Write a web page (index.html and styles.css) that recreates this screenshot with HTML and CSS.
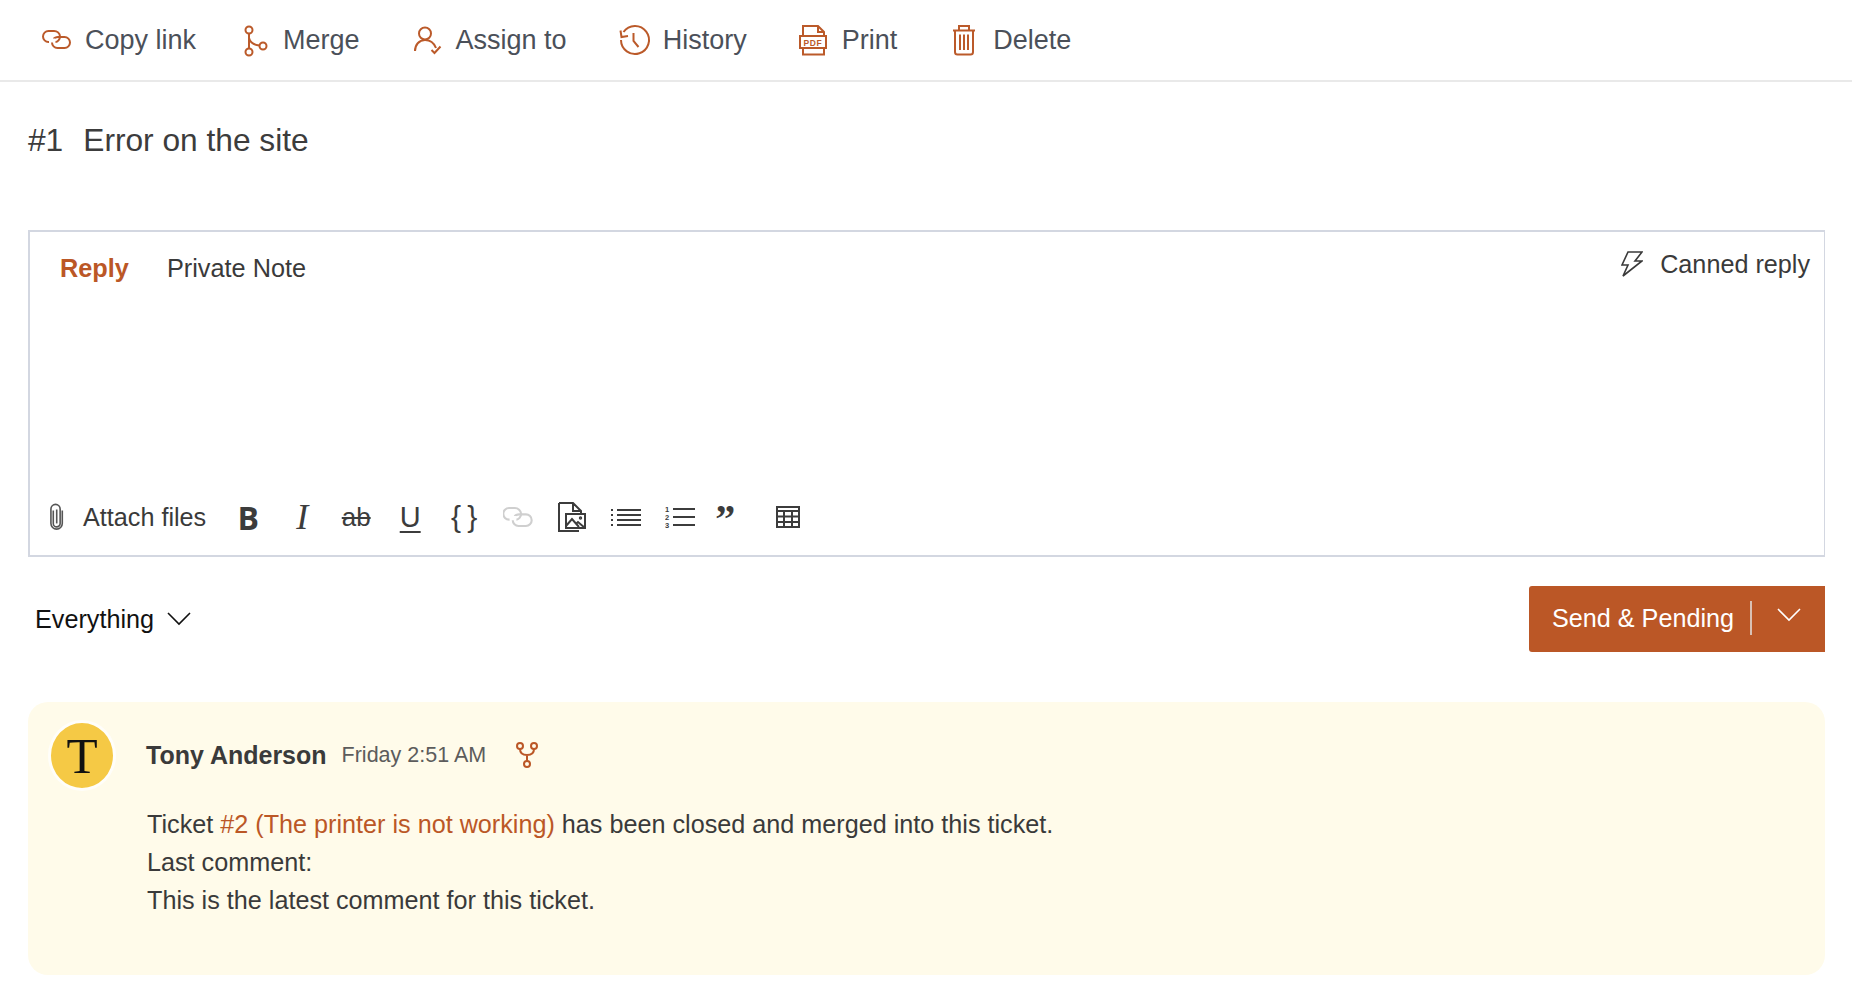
FILE: index.html
```html
<!DOCTYPE html>
<html lang="en">
<head>
<meta charset="utf-8">
<title>Error on the site</title>
<link rel="stylesheet" href="styles.css">
</head>
<body>
<nav class="topbar">
  <a class="tool t-copy">
    <svg class="ico" viewBox="0 0 28 28"><path d="M6 16H5.500a5.500 5.500 0 0 1 0-11H11a6 6 0 0 1 6 5.500c0 3-2.500 5.500-4.500 5.500"/><path d="M11 12.500c0-.5 2-1.500 4-1.500h6.500a5.500 5.500 0 0 1 0 11h-7a5.500 5.500 0 0 1-5.500-5.500"/></svg>
    <span>Copy link</span>
  </a>
  <a class="tool t-merge">
    <svg class="ico" viewBox="0 0 28 28"><circle cx="7" cy="4" r="3.500"/><circle cx="7" cy="26" r="3.500"/><circle cx="21" cy="20" r="3.500"/><path d="M7 7.500v15M7 12c1 4 5 7 10.500 7.500"/></svg>
    <span>Merge</span>
  </a>
  <a class="tool t-assign">
    <svg class="ico" viewBox="0 0 28 28"><circle cx="11" cy="7.500" r="6"/><path d="M1 25c0-6 4-11 10-11 5 0 9 3 11 8M17.500 24l3 3 6-6.500"/></svg>
    <span>Assign to</span>
  </a>
  <a class="tool t-history">
    <svg class="ico" viewBox="0 0 28 30"><path d="M3.500 7A14 14 0 1 1 1 15"/><path d="M.5 5.500 1.500 12l6.500-1"/><path d="M13.500 8v8l5 6"/></svg>
    <span>History</span>
  </a>
  <a class="tool t-print">
    <svg class="ico" viewBox="0 0 28 30"><path d="M4 11V1h15l6 6v4M4 23v6.500h21V23M19 1v6h6"/><rect x="1" y="11" width="26" height="12"/><text x="14" y="20.500" class="pdf">PDF</text></svg>
    <span>Print</span>
  </a>
  <a class="tool t-delete">
    <svg class="ico" viewBox="2 0 24 30"><path d="M3 5.500h22M9 5.500V1h10v4.500M5 5.500V27a2.500 2.500 0 0 0 2.500 2.500h13A2.500 2.500 0 0 0 23 27V5.500M10 9.500v15.500M14 9.500v15.500M18 9.500v15.500"/></svg>
    <span>Delete</span>
  </a>
</nav>

<main class="page">
  <h1 class="title"><span class="num">#1</span>Error on the site</h1>

  <section class="editor">
    <div class="tabs">
      <div class="tablist">
        <span class="tab active">Reply</span>
        <span class="tab">Private Note</span>
      </div>
      <div class="canned">
        <svg class="bolt" viewBox="0 0 22 26"><path d="M7 1h14l-7 9h7L2 25l5-11H1z"/></svg>
        <span>Canned reply</span>
      </div>
    </div>
    <div class="toolbar">
      <div class="attach">
        <svg class="clip" viewBox="0 0 14 26"><path d="M4 7v12a3.200 3.200 0 0 0 6.400 0V5.500a4.300 4.300 0 0 0-8.600 0V19a5.300 5.300 0 0 0 10.600 0V7"/><path d="M7.200 6v13"/></svg>
        <span>Attach files</span>
      </div>
      <div class="fmt">
        <span class="btn b-bold">B</span>
        <span class="btn b-italic">I</span>
        <span class="btn b-strike">ab</span>
        <span class="btn b-under">U</span>
        <span class="btn b-code">{ }</span>
        <span class="btn"><svg class="tb-link" viewBox="0 4 28 19"><path d="M6 16H5.500a5.500 5.500 0 0 1 0-11H11a6 6 0 0 1 6 5.500c0 3-2.500 5.500-4.500 5.500"/><path d="M11 12.500c0-.5 2-1.500 4-1.500h6.500a5.500 5.500 0 0 1 0 11h-7a5.500 5.500 0 0 1-5.500-5.500"/></svg></span>
        <span class="btn"><svg class="tb" viewBox="0 0 28 30"><path d="M1 1h14l8 8v2M15 1v8h8M1 1v28h14M1 29h20"/><rect x="8" y="12" width="19" height="14"/><path d="M8 24l6-7 7 8M18 22l2-2 7 6"/><circle cx="22.500" cy="16" r=".7"/></svg></span>
        <span class="btn"><svg class="tb" viewBox="0 0 30 20"><path d="M6 3h24M6 8h24M6 13h24M6 18h24"/><path d="M0 3h2M0 8h2M0 13h2M0 18h2"/></svg></span>
        <span class="btn"><svg class="tb" viewBox="0 0 30 24"><path d="M8 4h22M8 12h22M8 20h22"/><text x="0" y="7" class="ol">1</text><text x="0" y="15" class="ol">2</text><text x="0" y="23" class="ol">3</text></svg></span>
        <span class="btn b-quote">”</span>
        <span class="btn"><svg class="tb-table" viewBox="0 0 24 22"><rect x="1" y="1" width="22" height="20"/><path d="M1 5h22M1 10.500h22M1 16h22M8 5v16M16 5v16"/></svg></span>
      </div>
    </div>
  </section>

  <div class="actions">
    <div class="filter">
      <span>Everything</span>
      <svg class="chev" viewBox="0 0 24 14"><path d="M1 1l11 11L23 1"/></svg>
    </div>
    <button class="send">
      <span class="send-label">Send &amp; Pending</span>
      <span class="send-arrow"><svg class="chev" viewBox="0 0 24 14"><path d="M1 1l11 11L23 1"/></svg></span>
    </button>
  </div>

  <article class="message">
    <div class="avatar"><span>T</span></div>
    <div class="content">
      <header class="meta">
        <strong class="author">Tony Anderson</strong>
        <time class="when">Friday 2:51 AM</time>
        <svg class="fork" viewBox="0 0 22 26"><circle cx="4" cy="4" r="3"/><circle cx="18" cy="4" r="3"/><circle cx="11" cy="22" r="3"/><path d="M11 19v-6M4 7c0 4 3 6 7 6s7-2 7-6"/></svg>
      </header>
      <div class="body">
        <p>Ticket <a class="ref">#2 (The printer is not working)</a> has been closed and merged into this ticket.</p>
        <p>Last comment:</p>
        <p>This is the latest comment for this ticket.</p>
      </div>
    </div>
  </article>
</main>
</body>
</html>
```
FILE: styles.css
```css
* { box-sizing: border-box; }
html, body { margin: 0; padding: 0; background: #fff; }
body {
  font-family: "Liberation Sans", Arial, sans-serif;
  font-size: 25.200px;
  color: #3a3a3a;
  height: 1004px;
  overflow: hidden;
}
.topbar {
  display: flex;
  align-items: center;
  height: 82px;
  padding: 0 0 0 43px;
  border-bottom: 2px solid #e9e9e9;
  font-size: 27px;
  color: #4b5059;
}
.tool { display: flex; align-items: center; gap: 14px; }
.ico {
  width: 28px;
  height: 30px;
  fill: none;
  stroke: #bb5a2a;
  stroke-width: 2;
  overflow: visible;
}
.ico .pdf {
  font: bold 8.500px "Liberation Sans", sans-serif;
  text-anchor: middle;
  fill: #bb5a2a;
  stroke: none;
  letter-spacing: .6px;
}
.t-copy { margin-right: 46px; }
.t-merge { margin-right: 54px; gap: 13px; }
.t-assign { margin-right: 53px; }
.t-history { margin-right: 52px; gap: 15px; }
.t-print { margin-right: 55px; gap: 15px; }
.t-delete { gap: 17px; }
.t-delete .ico { width: 24px; }

.page { padding: 0 27px 0 28px; }
.title {
  margin: 0;
  height: 148px;
  padding-top: 34px;
  font-size: 31.700px;
  line-height: 48px;
  font-weight: 400;
  color: #3c3c3c;
}
.num { margin-right: 20px; }

.editor {
  height: 327px;
  border: 2px solid #d3d7e1;
  border-right-width: 1px;
  display: flex;
  flex-direction: column;
  justify-content: space-between;
  padding: 14px 14px 18px 14px;
}
.tabs { display: flex; justify-content: space-between; align-items: flex-start; }
.tablist { display: flex; gap: 38px; padding: 6px 0 0 16px; font-size: 25.300px; line-height: 32px; }
.tab.active { color: #bb5726; font-weight: 700; }
.canned { display: flex; align-items: center; gap: 17px; line-height: 32px; padding-top: 2px; }
.bolt { width: 22px; height: 26px; fill: none; stroke: #3a3a3a; stroke-width: 1.600; }

.toolbar { display: flex; align-items: center; height: 40px; }
.attach { display: flex; align-items: center; gap: 19px; margin-right: 15px; }
.clip { width: 15px; height: 28px; fill: none; stroke: #555; stroke-width: 1.500; margin-left: 5px; }
.fmt { display: flex; align-items: center; }
.btn {
  width: 54px;
  height: 40px;
  display: flex;
  align-items: center;
  justify-content: center;
  color: #3c3c3c;
}
.tb { width: 30px; height: 30px; fill: none; stroke: #3c3c3c; stroke-width: 2; }
.tb .ol { font: bold 7.500px "Liberation Sans", sans-serif; fill: #3c3c3c; stroke: none; }
.tb-link { width: 30px; height: 20px; fill: none; stroke: #cfcfcf; stroke-width: 2; }
.tb-table { width: 24px; height: 22px; fill: none; stroke: #3c3c3c; stroke-width: 2; }
.b-bold { font: 700 32px "Open Sans", sans-serif; }
.b-italic { font: italic 36px "Liberation Serif", serif; }
.b-strike { font-size: 26px; text-decoration: line-through; text-decoration-thickness: 1.500px; }
.b-under { font-size: 29px; text-decoration: underline; text-decoration-thickness: 2px; text-underline-offset: 4px; }
.b-code { font: 30px "Liberation Sans", sans-serif; word-spacing: -2px; }
.b-quote { font: 700 40px/40px "Liberation Serif", serif; padding: 4px 18px 0 0; }

.actions { display: flex; justify-content: space-between; align-items: center; margin-top: 29px; height: 66px; }
.filter { display: flex; align-items: center; gap: 13px; padding-left: 7px; color: #111; }
.chev { width: 24px; height: 14px; fill: none; stroke: currentColor; stroke-width: 1.600; }
.send {
  display: flex;
  align-items: center;
  width: 296px;
  height: 66px;
  margin: 0;
  padding: 0 0 2px 23px;
  border: 0;
  border-radius: 3px 0 0 3px;
  background: #bb5726;
  color: #fff;
  font: inherit;
}
.send-label { padding-right: 16px; }
.send-arrow { display: flex; padding-left: 25px; padding-bottom: 6px; height: 34px; align-items: center; border-left: 2px solid #d9c1b4; }

.message {
  display: flex;
  margin-top: 50px;
  height: 273px;
  background: #fffbea;
  border-radius: 20px;
  padding: 18px 20px;
}
.avatar {
  width: 68px;
  height: 71px;
  border: 3px solid #fffefa;
  border-radius: 50%;
  background: #f5c945;
  display: flex;
  align-items: center;
  justify-content: center;
  font: 51px "Liberation Serif", serif;
  color: #111;
  flex: none;
}
.content { margin-left: 30px; }
.meta { display: flex; align-items: center; height: 66px; margin-top: 2px; }
.author { font-size: 25px; margin-right: 15px; }
.when { font-size: 21.500px; color: #5c5c5c; margin-right: 30px; }
.fork { width: 22px; height: 26px; fill: none; stroke: #bb5726; stroke-width: 2; }
.body { margin-top: 17px; padding-left: 1px; line-height: 38px; }
.body p { margin: 0; }
.ref { color: #bb5726; }
```
